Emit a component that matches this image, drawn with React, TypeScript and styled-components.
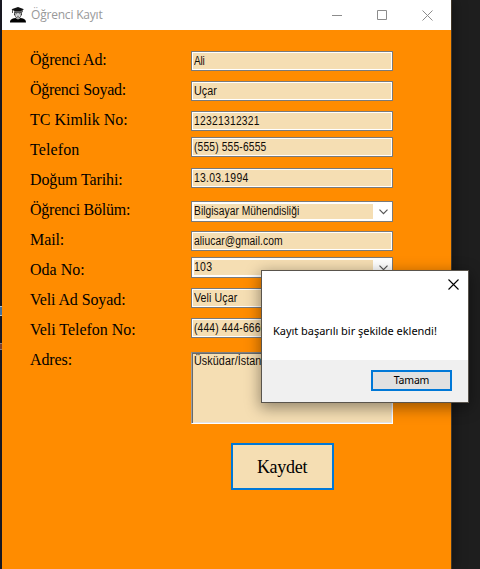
import React from "react";
import styled, { createGlobalStyle } from "styled-components";

const Global = createGlobalStyle`
  *, *::before, *::after { box-sizing: border-box; }
  body { margin: 0; background: #1e1e1e; overflow: hidden; }
`;

const Desktop = styled.div`
  position: relative;
  display: flex;
  width: 480px;
  height: 569px;
  overflow: hidden;
  background: #1e1e1e;
`;

const EditorEdge = styled.div`
  display: flex;
  flex-direction: column;
  align-items: flex-start;
  gap: 27px;
  flex: none;
  width: 2px;
  height: 569px;
  padding-top: 306px;
  background: #1b1b25;
`;

const EditorMark = styled.i<{ $edge: string; $fill: string; $height: number }>`
  width: 1.5px;
  height: ${(p) => p.$height}px;
  background: ${(p) => p.$fill};
  border: solid ${(p) => p.$edge};
  border-width: 1px 0;
`;

const Window = styled.section`
  display: flex;
  flex-direction: column;
  width: 450px;
  height: 569px;
  background: #ff8c00;
  border-right: 1px solid #42382a;
  box-shadow: 2px 0 12px rgba(0, 0, 0, 0.35);
`;

const TitleBar = styled.header`
  display: flex;
  align-items: center;
  height: 30px;
  flex: none;
  padding: 0 0.5px 0 7px;
  background: #fff;
`;

const Title = styled.h1`
  flex: 1;
  margin: 0 0 0 4px;
  font: 400 12px/16px "Open Sans", "Noto Sans", sans-serif;
  letter-spacing: -0.2px;
  color: #999;
`;

const Controls = styled.div`
  display: flex;
`;

const ControlButton = styled.button`
  display: grid;
  place-items: center;
  width: 45.5px;
  height: 28px;
  padding: 0;
  border: 0;
  background: none;
  color: #8c8c8c;
`;

const Form = styled.form`
  display: flex;
  flex-direction: column;
  padding: 15px 0 0 28px;
`;

const Row = styled.div`
  display: grid;
  grid-template-columns: 161px 202px;
  align-items: start;
  height: 30px;
`;

const Label = styled.label<{ $spacing: number }>`
  font: 16px/30px "Liberation Serif", serif;
  letter-spacing: ${(p) => p.$spacing}px;
  color: #000;
  white-space: nowrap;
`;

/* Condensed face of the classic form controls. */
const Value = styled.span<{ $stretch: number; $spacing: number }>`
  display: block;
  width: max-content;
  font-family: "Liberation Sans", sans-serif;
  font-size: 12.5px;
  letter-spacing: ${(p) => p.$spacing}px;
  color: #100c08;
  white-space: nowrap;
  transform: scaleX(${(p) => p.$stretch});
  transform-origin: left;
`;

const Field = styled.div<{ $top: number }>`
  height: 20px;
  margin-top: ${(p) => p.$top}px;
  padding-left: 2px;
  line-height: 18px;
  border: 1px solid #7a7a7a;
  background: #f5deb3;
  box-shadow: inset 0 0 0 1px #fff;
`;

const Combo = styled.div<{ $top: number }>`
  display: flex;
  height: 21px;
  margin-top: ${(p) => p.$top}px;
  padding: 2px;
  border: 1px solid #7a7a7a;
  background: #fff;
  line-height: 15px;
`;

const ComboValue = styled.div`
  width: 179px;
  height: 15px;
  background: #f5deb3;
`;

const ComboArrow = styled.span`
  display: grid;
  place-items: center;
  flex: 1;
  padding-left: 4px;
`;

const Area = styled.div<{ $top: number }>`
  height: 72px;
  margin-top: ${(p) => p.$top}px;
  padding: 1px 2px;
  line-height: 15px;
  background: #f5deb3;
  border: 1px solid;
  border-color: #808080 #fff #fff #a0a0a0;
  box-shadow: inset 1px 1px 0 #696969, inset -1px -1px 0 #e3e3e3;
`;

const SaveButton = styled.button`
  width: 103px;
  height: 47px;
  margin: 68px 0 0 201px;
  padding: 0 1px 0 0;
  border: 2px solid #0078d7;
  background: #f5deb3;
  color: #000;
  font: 18px/24px "Liberation Serif", serif;
  letter-spacing: -0.3px;
`;

const Dialog = styled.div`
  position: absolute;
  left: 261px;
  top: 270px;
  display: flex;
  flex-direction: column;
  width: 208px;
  height: 133px;
  border: 1px solid #59544c;
  background: #fff;
  box-shadow: 0 4px 14px 1px rgba(0, 0, 0, 0.4);
  font-family: "Noto Sans", sans-serif;
  color: #000;
`;

const DialogHead = styled.div`
  display: flex;
  justify-content: flex-end;
  height: 50px;
  padding: 8px 9px 0 0;
`;

const Message = styled.p`
  flex: 1;
  margin: 0;
  padding-left: 11px;
  font-size: 11px;
  line-height: 19px;
  letter-spacing: -0.03px;
  white-space: nowrap;
`;

const DialogFoot = styled.div`
  display: flex;
  justify-content: flex-end;
  height: 42px;
  padding: 10px 16px 0 0;
  background: #f0f0f0;
`;

const OkButton = styled.button`
  width: 81px;
  height: 21px;
  padding: 0;
  border: 2px solid #0078d7;
  background: #e1e1e1;
  color: #000;
  font: 10.5px/17px "Noto Sans", sans-serif;
  letter-spacing: -0.2px;
`;

const Graduate = () => (
  <svg width="18" height="18" viewBox="0 0 18 18">
    <path d="M9 1 15 3.2 13.6 4v2.2L12.8 6V4.3L12.4 5H5.6L4 4.2V7H3.3V3.8L2.5 3.3Z" fill="#111" />
    <path d="M5.2 5.2h7.6v2.6c.5.5.2 1.6-.5 1.8-.5 1.8-1.800 3-3.300 3s-2.800-1.200-3.300-3c-.8-.2-1-1.300-.5-1.800Z" fill="#333" />
    <path d="M6.300 6.800h5.400v2.400c0 1.400-1.200 2.500-2.700 2.500s-2.700-1.100-2.700-2.500Z" fill="#ddd" />
    <path d="M7 7.700h1.300M9.700 7.700H11M8 10.300h2" stroke="#444" strokeWidth=".7" />
    <path d="M1 16.500c0-3 1.500-4 5.500-4.600L9 13.400l2.500-1.500c4 .6 5.500 1.600 5.500 4.600Z" fill="#000" />
  </svg>
);

const Chevron = () => (
  <svg width="9" height="6" viewBox="0 0 9 6">
    <path d="m.5.700 4 4 4-4" fill="none" stroke="#555" strokeWidth="1.200" />
  </svg>
);

const Cross = ({ weight }: { weight: number }) => (
  <svg width="11" height="11" viewBox="0 0 11 11">
    <path d="m.5.5 10 10M10.500.5l-10 10" fill="none" stroke="currentColor" strokeWidth={weight} />
  </svg>
);

type Item = {
  label: string;
  labelSpacing: number;
  value: string;
  top: number;
  stretch: number;
  spacing: number;
  kind?: "combo" | "area";
};

const items: Item[] = [
  { label: "Öğrenci Ad:", labelSpacing: -0.2, value: "Ali", top: 6, stretch: 0.8, spacing: -0.2 },
  { label: "Öğrenci Soyad:", labelSpacing: -0.3, value: "Uçar", top: 6, stretch: 0.86, spacing: 0.1 },
  { label: "TC Kimlik No:", labelSpacing: 0, value: "12321312321", top: 6, stretch: 0.825, spacing: 0.3 },
  { label: "Telefon", labelSpacing: 0.1, value: "(555) 555-6555", top: 2, stretch: 0.82, spacing: 0.2 },
  { label: "Doğum Tarihi:", labelSpacing: -0.12, value: "13.03.1994", top: 3, stretch: 0.83, spacing: 0.3 },
  { label: "Öğrenci Bölüm:", labelSpacing: -0.24, value: "Bilgisayar Mühendisliği", top: 6, stretch: 0.82, spacing: 0.05, kind: "combo" },
  { label: "Mail:", labelSpacing: -0.1, value: "aliucar@gmail.com", top: 6, stretch: 0.825, spacing: 0.05 },
  { label: "Oda No:", labelSpacing: 0, value: "103", top: 2, stretch: 0.84, spacing: 0.3, kind: "combo" },
  { label: "Veli Ad Soyad:", labelSpacing: -0.1, value: "Veli Uçar", top: 3, stretch: 0.85, spacing: 0.1 },
  { label: "Veli Telefon No:", labelSpacing: -0.03, value: "(444) 444-6666", top: 3, stretch: 0.82, spacing: 0.2 },
  { label: "Adres:", labelSpacing: -0.1, value: "Üsküdar/İstanbul", top: 7, stretch: 0.86, spacing: 0.1, kind: "area" },
];

const Entry = ({ item }: { item: Item }) => {
  const { kind, top } = item;
  const text = <Value $stretch={item.stretch} $spacing={item.spacing}>{item.value}</Value>;
  if (kind === "area") return <Area $top={top}>{text}</Area>;
  if (kind === "combo")
    return (
      <Combo $top={top}>
        <ComboValue>{text}</ComboValue>
        <ComboArrow><Chevron /></ComboArrow>
      </Combo>
    );
  return <Field $top={top}>{text}</Field>;
};

export default function App() {
  return (
    <>
      <Global />
      <Desktop>
        <EditorEdge>
          <EditorMark $edge="#c8d8e0" $fill="#4a80b8" $height={10} />
          <EditorMark $edge="#a89088" $fill="#8a4a38" $height={7} />
        </EditorEdge>
        <Window>
          <TitleBar>
            <Graduate />
            <Title>Öğrenci Kayıt</Title>
            <Controls>
              <ControlButton aria-label="Simge durumuna küçült">
                <svg width="10" height="1"><path d="M0 .5h10" stroke="currentColor" /></svg>
              </ControlButton>
              <ControlButton aria-label="Ekranı kapla">
                <svg width="10" height="10"><path d="M.5.5h9v9h-9Z" fill="none" stroke="currentColor" /></svg>
              </ControlButton>
              <ControlButton aria-label="Kapat"><Cross weight={1} /></ControlButton>
            </Controls>
          </TitleBar>
          <Form>
            {items.map((item) => (
              <Row key={item.label}>
                <Label $spacing={item.labelSpacing}>{item.label}</Label>
                <Entry item={item} />
              </Row>
            ))}
            <SaveButton type="button">Kaydet</SaveButton>
          </Form>
        </Window>
        <Dialog role="dialog">
          <DialogHead><Cross weight={1.1} /></DialogHead>
          <Message>Kayıt başarılı bir şekilde eklendi!</Message>
          <DialogFoot><OkButton>Tamam</OkButton></DialogFoot>
        </Dialog>
      </Desktop>
    </>
  );
}
